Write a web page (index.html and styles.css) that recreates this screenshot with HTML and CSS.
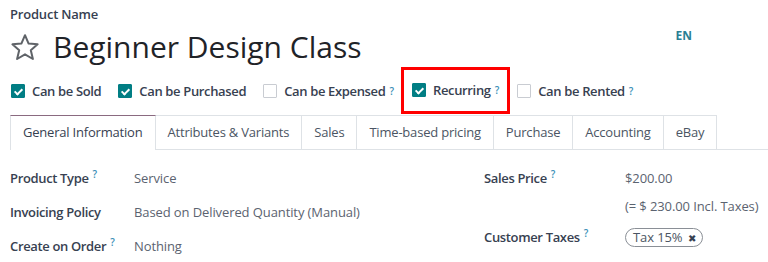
FILE: index.html
```html
<!DOCTYPE html>
<html>
<head>
<meta charset="utf-8">
<link rel="stylesheet" href="styles.css">
</head>
<body>
<div class="sheet">
  <div class="header">
    <div class="name-block">
      <div class="name-label">Product Name</div>
      <div class="title-row">
        <svg class="star" width="30" height="28" viewBox="0 0 30 28"><path d="M15 2.2 L18.6 10.6 L27.6 11.3 L20.8 17.2 L22.9 26 L15 21.3 L7.1 26 L9.2 17.2 L2.4 11.3 L11.4 10.6 Z" fill="none" stroke="#5f6368" stroke-width="2" stroke-linejoin="round"/></svg>
        <h1 class="title">Beginner Design Class</h1>
      </div>
    </div>
    <div class="lang">EN</div>
  </div>

  <div class="options">
    <label class="opt"><span class="cb on"></span>Can be Sold</label>
    <label class="opt"><span class="cb on"></span>Can be Purchased</label>
    <label class="opt"><span class="cb"></span>Can be Expensed<sup class="q">?</sup></label>
    <label class="opt highlight"><span class="cb on"></span>Recurring<sup class="q">?</sup></label>
    <label class="opt"><span class="cb"></span>Can be Rented<sup class="q">?</sup></label>
  </div>

  <div class="tabs">
    <div class="tab active">General Information</div>
    <div class="tab">Attributes &amp; Variants</div>
    <div class="tab">Sales</div>
    <div class="tab">Time-based pricing</div>
    <div class="tab">Purchase</div>
    <div class="tab">Accounting</div>
    <div class="tab">eBay</div>
  </div>

  <div class="fields">
    <div class="col left">
      <div class="row"><div class="lbl">Product Type<sup class="q">?</sup></div><div class="val">Service</div></div>
      <div class="row"><div class="lbl">Invoicing Policy</div><div class="val">Based on Delivered Quantity (Manual)</div></div>
      <div class="row"><div class="lbl">Create on Order<sup class="q">?</sup></div><div class="val">Nothing</div></div>
    </div>
    <div class="col right">
      <div class="row"><div class="lbl">Sales Price<sup class="q">?</sup></div><div class="val">$200.00</div></div>
      <div class="row sub"><div class="lbl"></div><div class="val">(= $ 230.00 Incl. Taxes)</div></div>
      <div class="row"><div class="lbl">Customer Taxes<sup class="q">?</sup></div><div class="val"><span class="tag">Tax 15% <span class="x">✖</span></span></div></div>
    </div>
  </div>
</div>
</body>
</html>
```
FILE: styles.css
```css
* { box-sizing: border-box; }
body {
  margin: 0;
  font-family: "Open Sans", "Liberation Sans", sans-serif;
  font-size: 13px;
  color: #212529;
  background: #fff;
}
.sheet { padding: 5px 0 0 10px; }
.header { display: flex; justify-content: space-between; width: 682px; }
.name-label { font-weight: 600; font-size: 13px; color: #374151; line-height: 18px; letter-spacing: -0.2px; }
.title-row { display: flex; align-items: center; gap: 13px; margin-top: 5px; }
.star { display: block; }
.title { margin: 0; font-weight: 400; font-size: 30px; line-height: 38px; color: #1f2328; }
.lang { font-weight: 700; font-size: 12px; color: #2a7f94; margin-top: 22px; }

.options { display: flex; align-items: center; margin-top: 3px; height: 43px; }
.opt { display: flex; align-items: center; font-weight: 600; color: #374151; margin-right: 16px; letter-spacing: -0.35px; }
.cb { width: 14px; height: 14px; border: 1px solid #c9ccd2; border-radius: 1px; margin: 0 7px 0 1px; background: #fff; position: relative; }
.cb.on { background: #017e84; border-color: #017e84; }
.cb.on::after { content: ""; position: absolute; left: 4px; top: 2px; width: 3px; height: 6px; border: solid #fff; border-width: 0 2px 2px 0; transform: rotate(45deg); }
.q { color: #3a8fb7; font-size: 10px; font-weight: 600; margin-left: 4px; vertical-align: 5px; line-height: 0; letter-spacing: 0; }
.highlight { outline: 3px solid #f00; outline-offset: 0; padding: 11px 8px 12px 7px; margin-left: -6px; margin-right: 9px; }

.tabs { display: flex; border-bottom: 1px solid #dee2e6; margin-top: 3px; width: 758px; }
.tab { padding: 7px 12px 7px; color: #4b5563; border: 1px solid #dee2e6; border-bottom: none; border-left: none; font-size: 13px; line-height: 19px; letter-spacing: -0.2px; }
.tab:first-child { border-left: 1px solid #dee2e6; }
.tab.active { border-top: 1px solid #8a6a80; color: #374151; background: #fff; margin-bottom: -1px; padding-bottom: 8px; }

.fields { display: flex; margin-top: 11px; }
.col.left { width: 474px; }
.col.right { width: 280px; }
.row { display: flex; align-items: center; height: 34px; }
.row.sub { height: 22px; margin-top: 0; margin-bottom: 3px; }
.lbl { font-weight: 600; color: #374151; letter-spacing: -0.35px; }
.left .lbl { width: 124px; }
.right .lbl { width: 141px; }
.val { color: #5b6370; letter-spacing: -0.1px; }
.tag { display: inline-block; border: 1px solid #8a8f96; border-radius: 10px; padding: 0 6px 0 7px; line-height: 16px; color: #4b5563; }
.x { font-size: 10px; color: #374151; margin-left: 2px; }
```
